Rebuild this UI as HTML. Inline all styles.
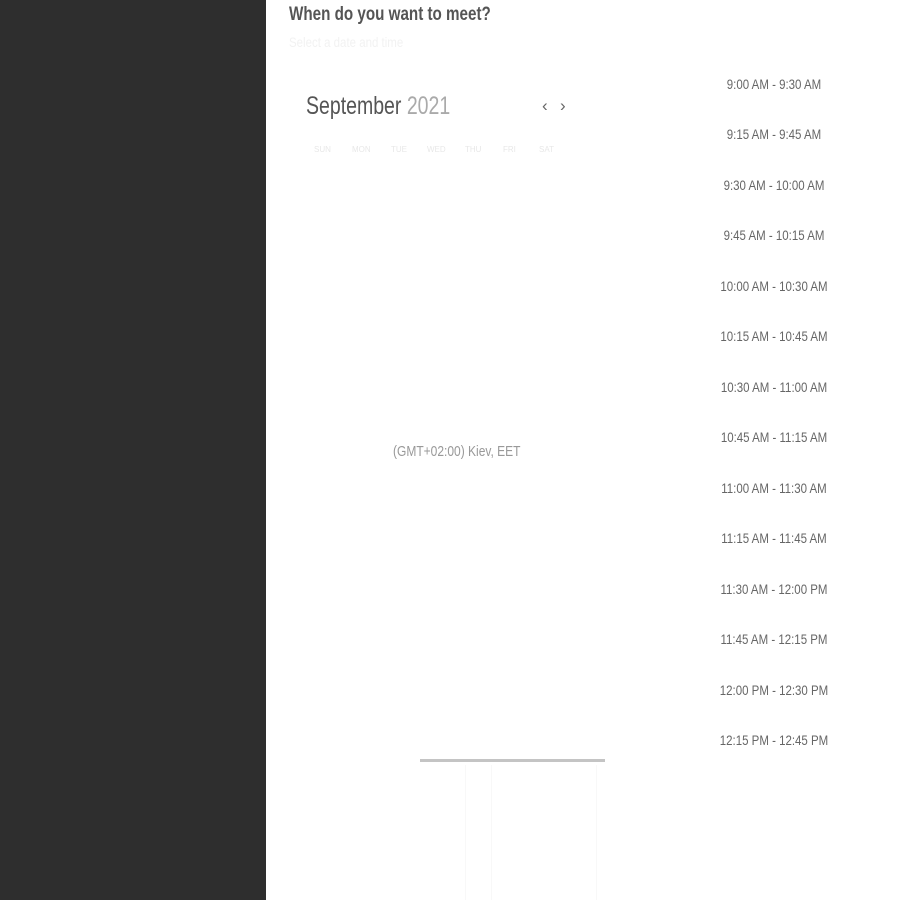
<!DOCTYPE html>
<html><head><meta charset="utf-8"><style>
html,body{margin:0;padding:0;width:900px;height:900px;overflow:hidden;background:#fff;font-family:"Liberation Sans",sans-serif}
.side{position:absolute;left:0;top:0;width:266px;height:900px;background:#2e2e2e}
.t{position:absolute;white-space:nowrap}
h1{position:absolute;left:289px;top:4px;margin:0;font-size:19px;font-weight:bold;color:#555;transform:scaleX(.8);transform-origin:left}
.sub{left:289px;top:34px;font-size:14px;color:#f2f2f2;transform:scaleX(.82);transform-origin:left}
.month{left:306px;top:92px;font-size:25px;color:#555;transform:scaleX(.78);transform-origin:left}
.month span{color:#aaa}
.nav{top:96px;font-size:17px;color:#666}
.dow{top:145px;font-size:8px;color:#e8e8e8}
.slot{left:700px;width:148px;text-align:center;font-size:14px;color:#666;transform:scaleX(.82)}
.tz{left:393px;top:443px;font-size:15px;color:#999;transform:scaleX(.8);transform-origin:left}
.bar{position:absolute;left:420px;top:759px;width:185px;height:3px;background:#c4c4c4}
.vl{position:absolute;top:765px;height:135px;width:1px;background:#f8f8f8}
</style></head><body>
<div class="side"></div>
<h1>When do you want to meet?</h1>
<div class="t sub">Select a date and time</div>
<div class="t month">September <span>2021</span></div>
<div class="t nav" style="left:542px">‹</div>
<div class="t nav" style="left:560px">›</div>
<div class="t dow" style="left:314px">SUN</div>
<div class="t dow" style="left:352px">MON</div>
<div class="t dow" style="left:391px">TUE</div>
<div class="t dow" style="left:427px">WED</div>
<div class="t dow" style="left:465px">THU</div>
<div class="t dow" style="left:503px">FRI</div>
<div class="t dow" style="left:539px">SAT</div>
<div class="t tz">(GMT+02:00) Kiev, EET</div>
<div class="t slot" style="top:76px">9:00 AM - 9:30 AM</div>
<div class="t slot" style="top:126px">9:15 AM - 9:45 AM</div>
<div class="t slot" style="top:177px">9:30 AM - 10:00 AM</div>
<div class="t slot" style="top:227px">9:45 AM - 10:15 AM</div>
<div class="t slot" style="top:278px">10:00 AM - 10:30 AM</div>
<div class="t slot" style="top:328px">10:15 AM - 10:45 AM</div>
<div class="t slot" style="top:379px">10:30 AM - 11:00 AM</div>
<div class="t slot" style="top:429px">10:45 AM - 11:15 AM</div>
<div class="t slot" style="top:480px">11:00 AM - 11:30 AM</div>
<div class="t slot" style="top:530px">11:15 AM - 11:45 AM</div>
<div class="t slot" style="top:581px">11:30 AM - 12:00 PM</div>
<div class="t slot" style="top:631px">11:45 AM - 12:15 PM</div>
<div class="t slot" style="top:682px">12:00 PM - 12:30 PM</div>
<div class="t slot" style="top:732px">12:15 PM - 12:45 PM</div>
<div class="bar"></div>
<div class="vl" style="left:465px"></div>
<div class="vl" style="left:491px"></div>
<div class="vl" style="left:596px"></div>
</body></html>
